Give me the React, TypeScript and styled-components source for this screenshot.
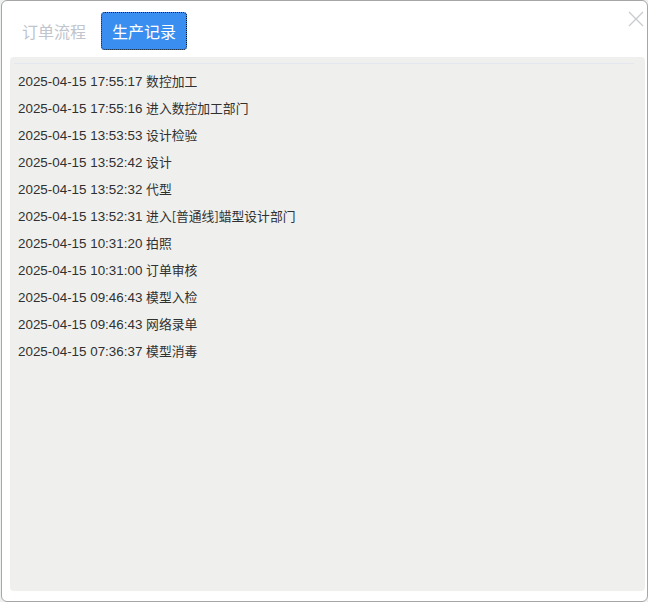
import React from "react";
import styled, { createGlobalStyle } from "styled-components";

const Global = createGlobalStyle`
  html, body { margin: 0; padding: 0; background: #eef0f0; }
  body { font-family: "Liberation Sans", "Noto Sans CJK SC", sans-serif; }
`;

const Dialog = styled.div`
  position: relative;
  box-sizing: border-box;
  margin-left: 1px;
  width: 647px;
  height: 602px;
  background: #fff;
  border: 1px solid #a6a6a6;
  border-radius: 6px;
  padding: 11px 2px 10px 8px;
  display: flex;
  flex-direction: column;
`;

const Tabs = styled.div`
  display: flex;
  align-items: center;
  gap: 4px;
  padding-left: 1px;
  height: 38px;
`;

const Tab = styled.div<{ $active?: boolean }>`
  box-sizing: border-box;
  height: 38px;
  padding: 0 11px;
  display: flex;
  align-items: center;
  font-size: 16px;
  border-radius: 4px;
  color: ${(p) => (p.$active ? "#fff" : "#c0c4cc")};
  background: ${(p) => (p.$active ? "#3a8ef0" : "transparent")};
  outline: ${(p) => (p.$active ? "1px dotted #1a1a1a" : "none")};
  outline-offset: -1px;
  font-family: "Noto Sans CJK SC", sans-serif;
`;

const Close = styled.div`
  position: absolute;
  top: 10px;
  right: 3px;
  width: 16px;
  height: 16px;
`;

const Panel = styled.div`
  margin-top: 7px;
  flex: 1;
  background: #eff0ee;
  border-radius: 4px;
  padding: 6px 0 0 8px;
  position: relative;
`;

const Line = styled.div`
  height: 1px;
  background: #e4e6f0;
  margin: 0 0 3px -4px;
  width: 620px;
`;

const Row = styled.div`
  height: 27px;
  line-height: 27px;
  font-size: 13.4px;
  color: #303030;
  white-space: nowrap;
`;

const Event = styled.span`
  font-size: 12.8px;
  font-family: "Noto Sans CJK SC", sans-serif;
`;

const rows: [string, string][] = [
  ["2025-04-15 17:55:17", "数控加工"],
  ["2025-04-15 17:55:16", "进入数控加工部门"],
  ["2025-04-15 13:53:53", "设计检验"],
  ["2025-04-15 13:52:42", "设计"],
  ["2025-04-15 13:52:32", "代型"],
  ["2025-04-15 13:52:31", "进入[普通线]蜡型设计部门"],
  ["2025-04-15 10:31:20", "拍照"],
  ["2025-04-15 10:31:00", "订单审核"],
  ["2025-04-15 09:46:43", "模型入检"],
  ["2025-04-15 09:46:43", "网络录单"],
  ["2025-04-15 07:36:37", "模型消毒"],
];

export default function App() {
  return (
    <>
      <Global />
      <Dialog>
        <Tabs>
          <Tab>订单流程</Tab>
          <Tab $active>生产记录</Tab>
        </Tabs>
        <Close>
          <svg width="16" height="16" viewBox="0 0 16 16">
            <path d="M1 1 L15 15 M15 1 L1 15" stroke="#c8cad0" strokeWidth="1.3" fill="none" />
          </svg>
        </Close>
        <Panel>
          <Line />
          {rows.map(([t, e], i) => (
            <Row key={i}>
              {t} <Event>{e}</Event>
            </Row>
          ))}
        </Panel>
      </Dialog>
    </>
  );
}
